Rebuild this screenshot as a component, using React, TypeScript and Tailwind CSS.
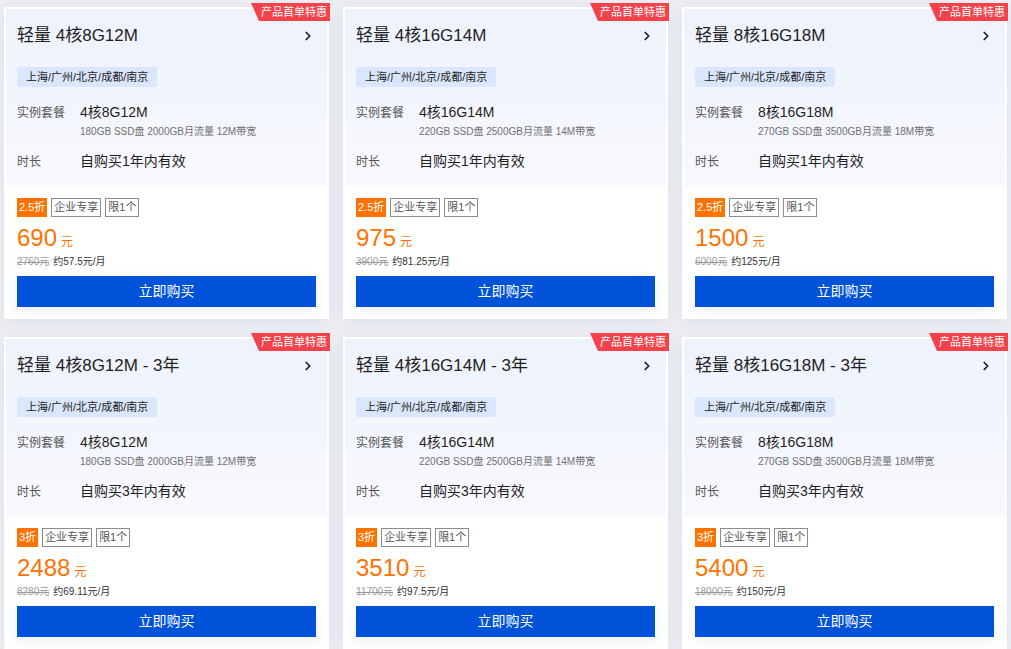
import { ChevronRight } from 'lucide-react';

type Plan = {
  name: string;
  spec: string;
  detail: string;
  duration: string;
  discount: string;
  price: string;
  original: string;
  monthly: string;
};

const plans: Plan[] = [
  { name: '轻量 4核8G12M', spec: '4核8G12M', detail: '180GB SSD盘 2000GB月流量 12M带宽', duration: '自购买1年内有效', discount: '2.5折', price: '690', original: '2760元', monthly: '约57.5元/月' },
  { name: '轻量 4核16G14M', spec: '4核16G14M', detail: '220GB SSD盘 2500GB月流量 14M带宽', duration: '自购买1年内有效', discount: '2.5折', price: '975', original: '3900元', monthly: '约81.25元/月' },
  { name: '轻量 8核16G18M', spec: '8核16G18M', detail: '270GB SSD盘 3500GB月流量 18M带宽', duration: '自购买1年内有效', discount: '2.5折', price: '1500', original: '6000元', monthly: '约125元/月' },
  { name: '轻量 4核8G12M - 3年', spec: '4核8G12M', detail: '180GB SSD盘 2000GB月流量 12M带宽', duration: '自购买3年内有效', discount: '3折', price: '2488', original: '8280元', monthly: '约69.11元/月' },
  { name: '轻量 4核16G14M - 3年', spec: '4核16G14M', detail: '220GB SSD盘 2500GB月流量 14M带宽', duration: '自购买3年内有效', discount: '3折', price: '3510', original: '11700元', monthly: '约97.5元/月' },
  { name: '轻量 8核16G18M - 3年', spec: '8核16G18M', detail: '270GB SSD盘 3500GB月流量 18M带宽', duration: '自购买3年内有效', discount: '3折', price: '5400', original: '18000元', monthly: '约150元/月' },
];

function PlanCard({ plan }: { plan: Plan }) {
  return (
    <div className="relative h-[312px] border-2 border-white bg-white shadow-[0_2px_14px_rgba(30,50,100,0.07)] flex flex-col">
      {/* ribbon */}
      <div className="absolute -top-[6px] -right-[3px] h-[18px] pl-[10px] pr-[3px] bg-[#f5424a] text-white text-[11px] leading-[18px] [clip-path:polygon(0_0,100%_0,100%_100%,8px_100%)]">
        产品首单特惠
      </div>

      <div className="h-[178px] px-[11px] bg-gradient-to-b from-[#edf2fc] to-[#f8f9fd]">
        <div className="pt-[16px] flex items-center justify-between h-[38px]">
          <div className="text-[17px] leading-[22px] text-[#1f1f1f]">{plan.name}</div>
          <ChevronRight className="w-[14px] h-[14px] text-[#1f1f1f] mr-[1px]" strokeWidth={3} />
        </div>
        <div className="mt-[20px] inline-flex h-[20px] items-center px-[9px] rounded-[2px] bg-[#dae6fc] text-[11px] text-[#222]">
          上海/广州/北京/成都/南京
        </div>
        <div className="mt-[15px] flex h-[20px] items-center">
          <div className="w-[63px] text-[12px] text-[#555]">实例套餐</div>
          <div className="text-[14px] text-[#1f1f1f]">{plan.spec}</div>
        </div>
        <div className="mt-[2px] pl-[63px] text-[10px] leading-[14px] text-[#707070]">{plan.detail}</div>
        <div className="mt-[13px] flex h-[20px] items-center">
          <div className="w-[63px] text-[12px] text-[#555]">时长</div>
          <div className="text-[14px] text-[#1f1f1f]">{plan.duration}</div>
        </div>
      </div>

      <div className="flex-1 px-[11px] pt-[11px] bg-white">
        <div className="flex gap-[4px] h-[19px]">
          <span className="px-[2px] bg-[#ff7200] text-white text-[11px] leading-[19px]">{plan.discount}</span>
          <span className="px-[2px] border border-[#8c8c8c] text-[#555] text-[11px] leading-[17px]">企业专享</span>
          <span className="px-[2px] border border-[#8c8c8c] text-[#555] text-[11px] leading-[17px]">限1个</span>
        </div>
        <div className="mt-[7px] flex items-baseline h-[28px] text-[#ff7200]">
          <span className="text-[24px] leading-[28px]">{plan.price}</span>
          <span className="ml-[4px] text-[12px]">元</span>
        </div>
        <div className="mt-[3px] flex items-center gap-[4px] text-[10px] leading-[14px]">
          <span className="text-[#999] line-through">{plan.original}</span>
          <span className="text-[#333]">{plan.monthly}</span>
        </div>
        <button className="mt-[7px] w-full h-[31px] bg-[#0052d9] text-white text-[14px] shadow-[0_4px_14px_rgba(0,40,120,0.08)]">
          立即购买
        </button>
      </div>
    </div>
  );
}

export default function App() {
  return (
    <div
      className="h-[649px] overflow-hidden bg-[#eceef3] px-[4px] pt-[7px]"
      style={{ fontFamily: '"Liberation Sans", "Noto Sans CJK SC", sans-serif' }}
    >
      <div className="grid grid-cols-3 gap-x-[14px] gap-y-[18px]">
        {plans.map((p) => (
          <PlanCard key={p.name} plan={p} />
        ))}
      </div>
    </div>
  );
}
